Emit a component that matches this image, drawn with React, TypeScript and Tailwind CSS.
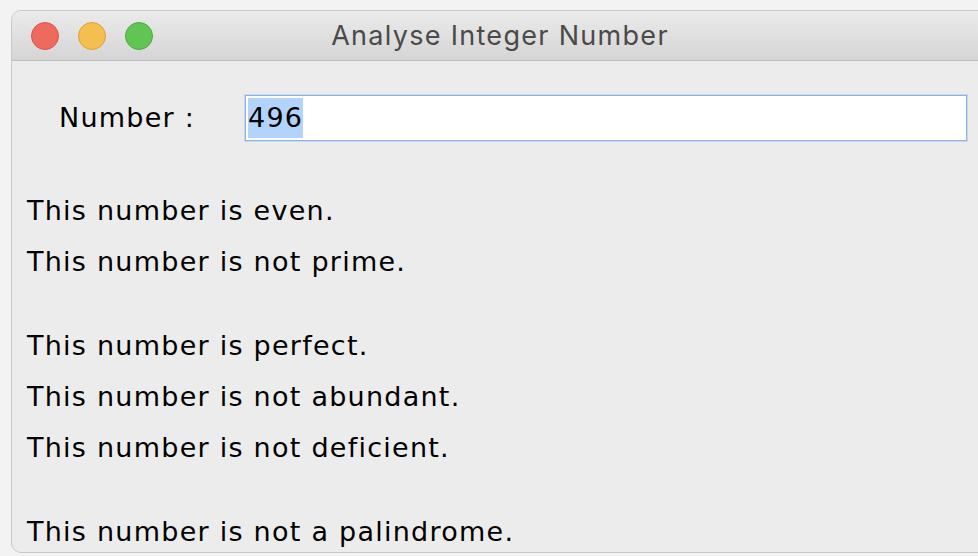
import React from "react";

const lines: (string | null)[] = [
  "This number is even.",
  "This number is not prime.",
  null,
  "This number is perfect.",
  "This number is not abundant.",
  "This number is not deficient.",
  null,
  "This number is not a palindrome.",
];

function TrafficLight({ fill, ring }: { fill: string; ring: string }) {
  return (
    <span
      className="block h-[28px] w-[28px] rounded-full border"
      style={{ background: fill, borderColor: ring }}
    />
  );
}

export default function App() {
  return (
    <div className="h-[556px] w-[978px] overflow-hidden bg-[#f3f3f3]">
      <div className="ml-[11px] mt-[10px] h-[543px] w-[990px] overflow-hidden rounded-[10px] border border-[#c9c9c9] bg-[#ececec]">
        {/* title bar */}
        <div className="relative flex h-[50px] items-center border-b border-[#bdbdbd] bg-gradient-to-b from-[#ebebeb] to-[#d5d5d5]">
          <div className="flex items-center gap-[19px] pl-[19px]">
            <TrafficLight fill="#ee6a5f" ring="#d9544a" />
            <TrafficLight fill="#f5bf4f" ring="#dea236" />
            <TrafficLight fill="#61c554" ring="#4caa3f" />
          </div>
          <div
            className="absolute left-0 top-0 flex h-full w-[976px] items-center justify-center text-[27px] tracking-[1.3px] text-[#4a4a4a]"
            style={{ fontFamily: "Inter, 'Liberation Sans', sans-serif" }}
          >
            <span className="mt-[1px]">Analyse Integer Number</span>
          </div>
        </div>

        {/* body */}
        <div
          className="text-[27px] tracking-[1.25px] text-black"
          style={{ fontFamily: "'DejaVu Sans', 'Liberation Sans', sans-serif" }}
        >
          <div className="flex items-center pl-[47px] pt-[34px]">
            <span className="w-[186px]">Number :</span>
            <div className="flex h-[46px] w-[722px] items-center border border-[#8ab4e6] bg-white pl-[2px] shadow-[0_0_0_1px_rgba(140,180,230,0.35)]">
              <span className="bg-[#b2d3fb] leading-[40px]">496</span>
            </div>
          </div>

          <div className="pl-[15px] pt-[44px]">
            {lines.map((t, i) =>
              t === null ? (
                <div key={i} className="h-[33px]" />
              ) : (
                <div key={i} className="h-[51px] leading-[51px]">
                  {t}
                </div>
              )
            )}
          </div>
        </div>
      </div>
    </div>
  );
}
